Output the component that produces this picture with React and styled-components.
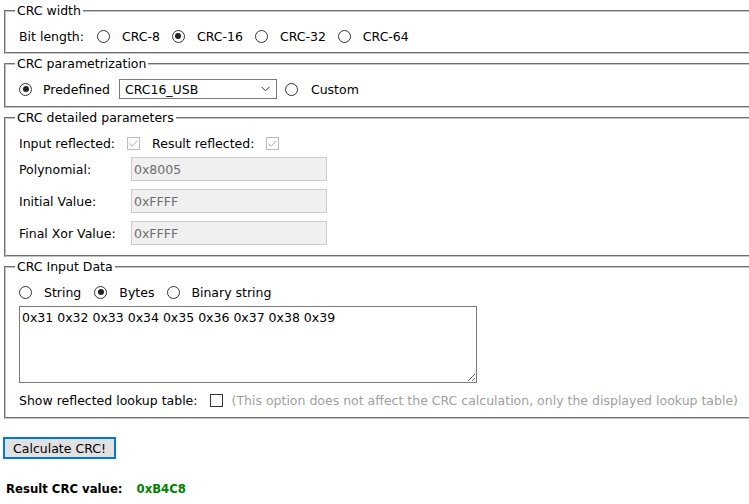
import React from "react";
import styled, { createGlobalStyle } from "styled-components";

const Global = createGlobalStyle`
  html, body { margin: 0; padding: 0; background: #fff; overflow: hidden; }
  body {
    font-family: "DejaVu Sans", Verdana, sans-serif;
    font-size: 12.5px;
    color: #000;
  }
`;

const Page = styled.div`
  width: 749px;
  height: 504px;
  padding: 3px 0 0 4px;
  box-sizing: border-box;
  overflow: hidden;
`;

const Fieldset = styled.fieldset`
  width: 780px;
  box-sizing: border-box;
  margin: 0 0 ${(p) => p.$mb ?? 2}px 0;
  padding: ${(p) => p.$pt || 7}px 0 ${(p) => p.$pb || 6}px 13px;
  border: 2px groove #c4c4c4;
  min-width: 0;
`;

const Legend = styled.legend`
  padding: 0 2px;
  margin-left: -4px;
  line-height: 16px;
`;

const Row = styled.div`
  display: flex;
  align-items: center;
  height: 20px;
  gap: ${(p) => p.$gap ?? 11}px;
`;

const Text = styled.span`
  white-space: nowrap;
  margin-right: ${(p) => p.$mr || 0}px;
  color: ${(p) => (p.$muted ? "#a0a0a0" : "inherit")};
`;

const Option = styled.label`
  display: inline-flex;
  align-items: center;
  gap: ${(p) => p.$gap ?? 12}px;
  white-space: nowrap;
`;

const Radio = styled.span`
  width: 13px;
  height: 13px;
  box-sizing: border-box;
  border-radius: 50%;
  border: 1px solid #333;
  background: #fff;
  display: inline-flex;
  align-items: center;
  justify-content: center;
  flex: none;
  &::after {
    content: "";
    width: 6px;
    height: 6px;
    border-radius: 50%;
    background: #222;
    display: ${(p) => (p.$checked ? "block" : "none")};
  }
`;

const Check = styled.span`
  width: 13px;
  height: 13px;
  box-sizing: border-box;
  border: 1px solid ${(p) => (p.$disabled ? "#bcbcbc" : "#333")};
  background: #fff;
  display: inline-flex;
  align-items: center;
  justify-content: center;
  flex: none;
  margin-right: ${(p) => p.$mr || 0}px;
`;

const Select = styled.div`
  width: 158px;
  height: 20px;
  box-sizing: border-box;
  border: 1px solid #7a7a7a;
  display: flex;
  align-items: center;
  justify-content: space-between;
  padding: 0 6px 0 5px;
  margin: 0 -2px 0 -1px;
`;

const ParamGrid = styled.div`
  display: grid;
  grid-template-columns: 112px 196px;
  row-gap: 8px;
  align-items: center;
  margin-top: 4px;
`;

const Disabled = styled.div`
  height: 24px;
  box-sizing: border-box;
  border: 1px solid #cccccc;
  background: #f0f0f0;
  color: #6d6d6d;
  display: flex;
  align-items: center;
  padding-left: 2px;
`;

const TextArea = styled.textarea`
  display: block;
  width: 458px;
  height: 77px;
  box-sizing: border-box;
  margin: 4px 0 7px 0;
  border: 1px solid #7a7a7a;
  padding: 3px 2px;
  font: inherit;
  color: #000;
  resize: both;
  outline: none;
`;

const Button = styled.button`
  display: block;
  margin: 18px 0 0 -1px;
  height: 22px;
  width: 113px;
  box-sizing: border-box;
  border: 2px solid #0078d7;
  background: #e1e1e1;
  font: inherit;
  color: #000;
  padding: 0;
`;

const Result = styled.div`
  margin: 23px 0 0 2px;
  display: flex;
  gap: 14px;
  font-weight: bold;
  font-size: 11.7px;
`;

const Value = styled.span`
  color: #008000;
`;

const Tick = ({ color }) => (
  <svg width="11" height="11" viewBox="0 0 11 11">
    <path d="M1.5 5.5 L4.2 8.2 L9.5 2.5" fill="none" stroke={color} strokeWidth="1" />
  </svg>
);

const Chevron = () => (
  <svg width="9" height="6" viewBox="0 0 9 6">
    <path d="M0.5 0.8 L4.5 4.8 L8.5 0.8" fill="none" stroke="#333" strokeWidth="1" />
  </svg>
);

export default function App() {
  return (
    <>
      <Global />
      <Page>
        <Fieldset>
          <Legend>CRC width</Legend>
          <Row $gap={12}>
            <Text $mr={1}>Bit length:</Text>
            <Option><Radio />CRC-8</Option>
            <Option><Radio $checked />CRC-16</Option>
            <Option><Radio />CRC-32</Option>
            <Option><Radio />CRC-64</Option>
          </Row>
        </Fieldset>

        <Fieldset $pb={7}>
          <Legend>CRC parametrization</Legend>
          <Row $gap={10}>
            <Option $gap={11}><Radio $checked />Predefined</Option>
            <Select>
              <span>CRC16_USB</span>
              <Chevron />
            </Select>
            <Option $gap={13}><Radio />Custom</Option>
          </Row>
        </Fieldset>

        <Fieldset $pt={7} $pb={10}>
          <Legend>CRC detailed parameters</Legend>
          <Row $gap={12}>
            <Text>Input reflected:</Text>
            <Check $disabled><Tick color="#b0b0b0" /></Check>
            <Text>Result reflected:</Text>
            <Check $disabled><Tick color="#b0b0b0" /></Check>
          </Row>
          <ParamGrid>
            <Text>Polynomial:</Text>
            <Disabled>0x8005</Disabled>
            <Text>Initial Value:</Text>
            <Disabled>0xFFFF</Disabled>
            <Text>Final Xor Value:</Text>
            <Disabled>0xFFFF</Disabled>
          </ParamGrid>
        </Fieldset>

        <Fieldset $pb={7} $mb={0}>
          <Legend>CRC Input Data</Legend>
          <Row $gap={13}>
            <Option $gap={12}><Radio />String</Option>
            <Option $gap={12}><Radio $checked />Bytes</Option>
            <Option $gap={11}><Radio />Binary string</Option>
          </Row>
          <TextArea defaultValue="0x31 0x32 0x33 0x34 0x35 0x36 0x37 0x38 0x39" />
          <Row $gap={9}>
            <Text $mr={3}>Show reflected lookup table:</Text>
            <Check />
            <Text $muted>(This option does not affect the CRC calculation, only the displayed lookup table)</Text>
          </Row>
        </Fieldset>

        <Button>Calculate CRC!</Button>
        <Result>
          <span>Result CRC value:</span>
          <Value>0xB4C8</Value>
        </Result>
      </Page>
    </>
  );
}
